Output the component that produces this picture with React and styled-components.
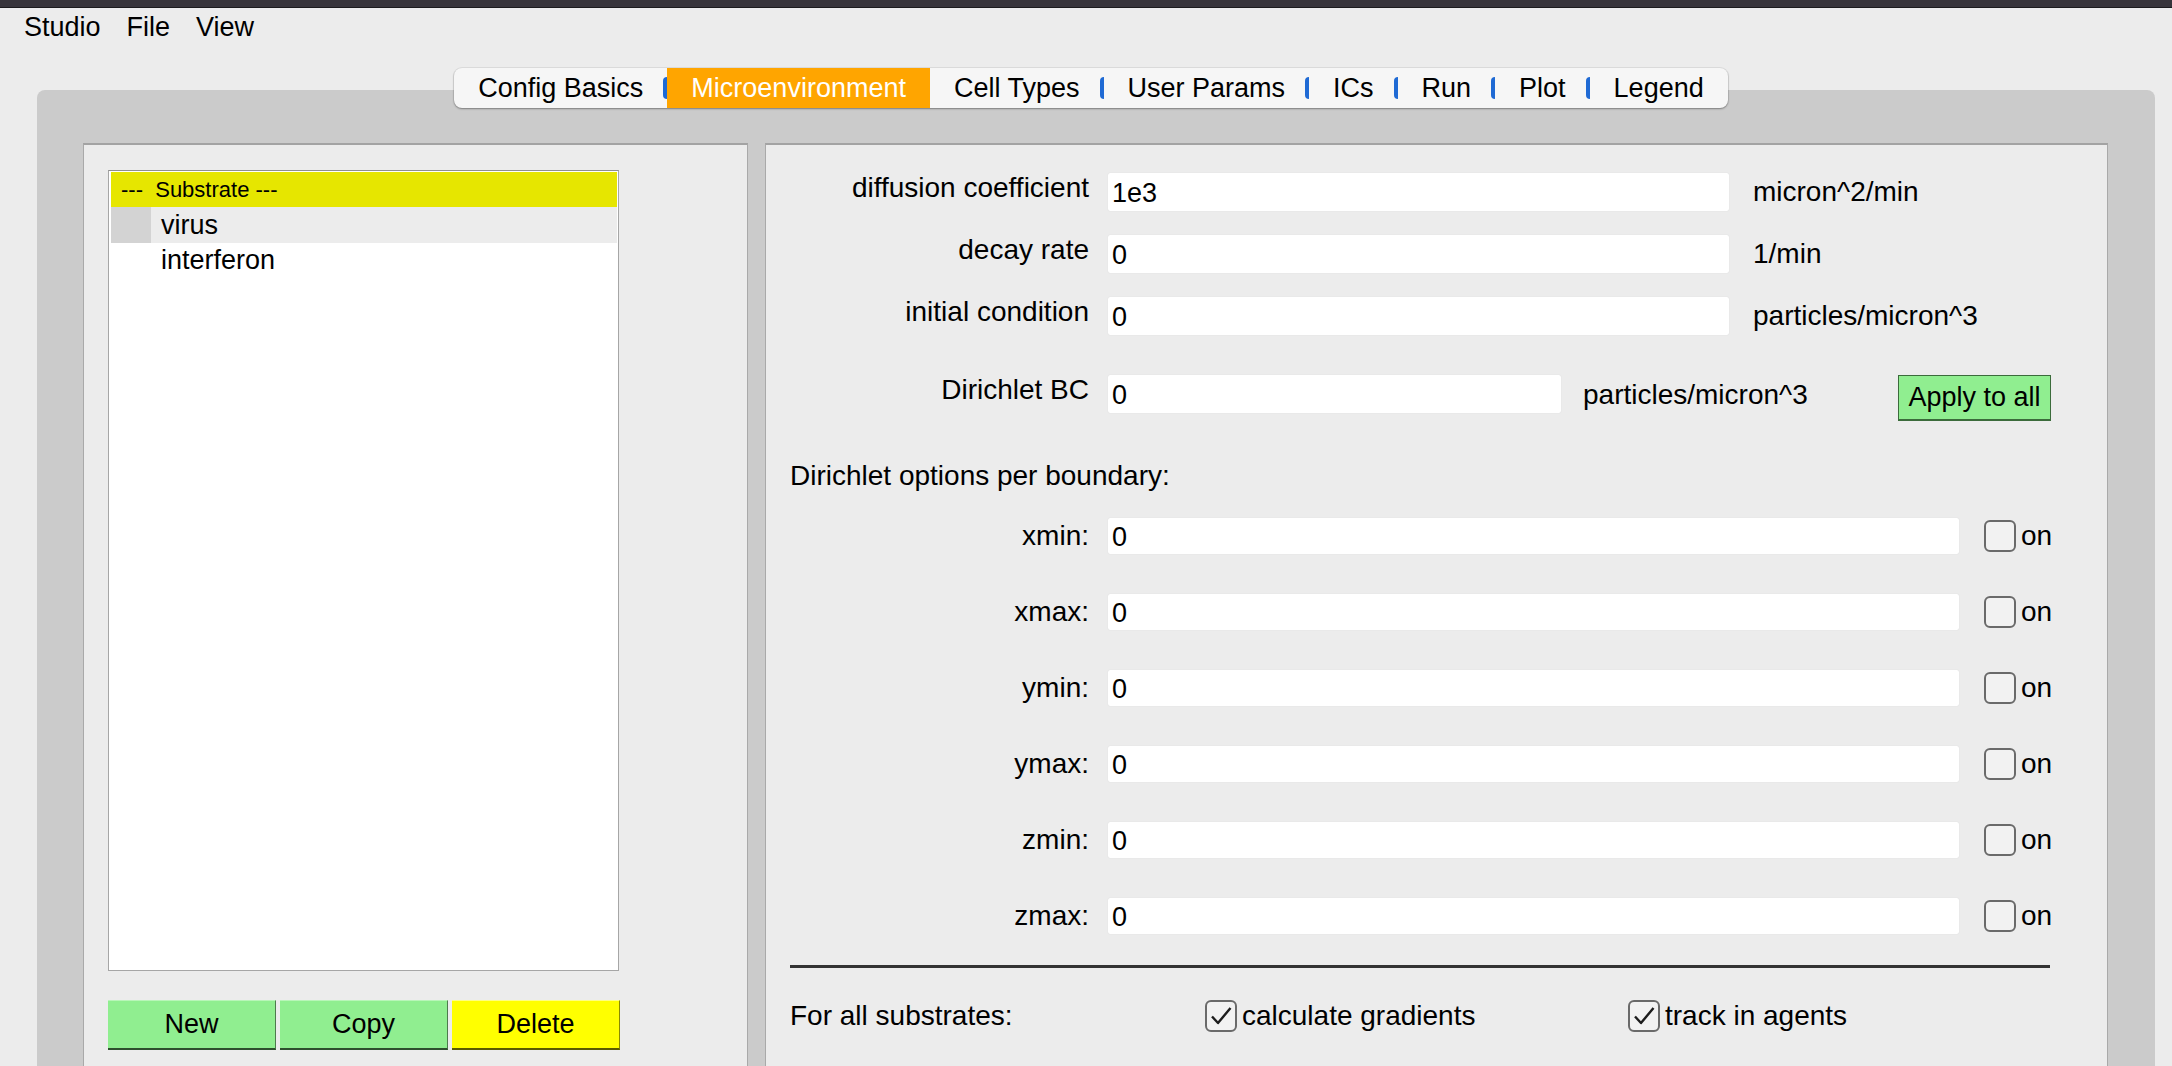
import React from "react"
import styled, { createGlobalStyle } from "styled-components"

const GlobalStyle = createGlobalStyle`
    html, body {
        margin: 0;
        padding: 0;
        background: #ececec;
        font-family: "Liberation Sans", Arial, sans-serif;
        color: #000;
    }
    #root {
        height: 1066px;
        overflow: hidden;
    }
`

const tabs = [
    { name: 'Config Basics', sep: true },
    { name: 'Microenvironment', active: true },
    { name: 'Cell Types', sep: true },
    { name: 'User Params', sep: true },
    { name: 'ICs', sep: true },
    { name: 'Run', sep: true },
    { name: 'Plot', sep: true },
    { name: 'Legend' },
]

const fields = [
    { label: 'diffusion coefficient', value: '1e3', unit: 'micron^2/min' },
    { label: 'decay rate', value: '0', unit: '1/min' },
    { label: 'initial condition', value: '0', unit: 'particles/micron^3' },
]

const boundaries = ['xmin', 'xmax', 'ymin', 'ymax', 'zmin', 'zmax']

const Check = () => (
    <svg width="26" height="26" viewBox="0 0 26 26">
        <path d="M4 13.5 L10 20 L22.5 5" fill="none" stroke="#1d1d1d" strokeWidth="2.4" strokeLinejoin="round" />
    </svg>
)

export default function App() {
    return (
        <>
            <GlobalStyle />
            <TitleStrip />
            <MenuBar>
                <MenuItem>Studio</MenuItem>
                <MenuItem>File</MenuItem>
                <MenuItem>View</MenuItem>
            </MenuBar>
            <TabWidget>
                <TabBar>
                    {tabs.map(t => (
                        <Tab key={t.name} $active={t.active} $sep={t.sep}>
                            {t.name}
                        </Tab>
                    ))}
                </TabBar>
                <Frame>
                    <LeftPanel>
                        <ListBox>
                            <ListHeader>---&nbsp;&nbsp;Substrate ---</ListHeader>
                            <ListRow $selected>
                                <RowMarker />
                                virus
                            </ListRow>
                            <ListRow>
                                <RowMarker $hidden />
                                interferon
                            </ListRow>
                        </ListBox>
                        <ButtonRow>
                            <ActionBtn>New</ActionBtn>
                            <ActionBtn>Copy</ActionBtn>
                            <ActionBtn $yellow>Delete</ActionBtn>
                        </ButtonRow>
                    </LeftPanel>

                    <RightPanel>
                        {fields.map(f => (
                            <FieldRow key={f.label}>
                                <Label>{f.label}</Label>
                                <Input $w={621} defaultValue={f.value} />
                                <Unit>{f.unit}</Unit>
                            </FieldRow>
                        ))}
                        <BcRow>
                            <Label>Dirichlet BC</Label>
                            <Input $w={453} defaultValue="0" />
                            <Unit $gap={22}>particles/micron^3</Unit>
                            <ApplyBtn>Apply to all</ApplyBtn>
                        </BcRow>
                        <Heading>Dirichlet options per boundary:</Heading>
                        <BoundaryList>
                            {boundaries.map(b => (
                                <BoundaryRow key={b}>
                                    <Label $center>{b}:</Label>
                                    <Input $w={851} $h={36} defaultValue="0" />
                                    <CheckItem $gap={25}>
                                        <Box />
                                        on
                                    </CheckItem>
                                </BoundaryRow>
                            ))}
                        </BoundaryList>
                        <Divider />
                        <AllRow>
                            <span>For all substrates:</span>
                            <CheckItem>
                                <Box><Check /></Box>
                                calculate gradients
                            </CheckItem>
                            <CheckItem>
                                <Box><Check /></Box>
                                track in agents
                            </CheckItem>
                        </AllRow>
                    </RightPanel>
                </Frame>
            </TabWidget>
        </>
    )
}

const TitleStrip = styled.div`
    height: 7px;
    background: #37343b;
    border-bottom: 1px solid #1b1a1d;
`

const MenuBar = styled.div`
    display: flex;
    align-items: center;
    height: 39px;
    padding-left: 11px;
    font-size: 27px;
`

const MenuItem = styled.div`
    padding: 0 13px;
`

const TabWidget = styled.div`
    margin: 21px 17px 0 37px;
    display: flex;
    flex-direction: column;
    align-items: center;
`

const TabBar = styled.div`
    position: relative;
    z-index: 1;
    display: flex;
    height: 40px;
    margin-bottom: -18px;
    margin-left: -10px;
    background: #f6f6f6;
    border-radius: 8px;
    box-shadow: 0 1px 2px rgba(0, 0, 0, 0.35), 0 0 0 1px rgba(0, 0, 0, 0.06);
    overflow: hidden;
`

const Tab = styled.div`
    position: relative;
    display: flex;
    align-items: center;
    padding: 0 24px;
    font-size: 27px;
    color: ${p => p.$active ? '#fff' : '#000'};
    background: ${p => p.$active ? '#ffa500' : 'transparent'};

    &::after {
        content: '';
        display: ${p => p.$sep ? 'block' : 'none'};
        position: absolute;
        right: 0;
        top: 9px;
        bottom: 9px;
        width: 4px;
        background: #1f6ad4;
        border-radius: 4px 0 0 4px;
    }
`

const Frame = styled.div`
    align-self: stretch;
    display: flex;
    gap: 17px;
    height: 1000px;
    padding: 53px 47px 0 46px;
    background: #cbcbcb;
    border-radius: 8px 8px 0 0;
`

const Panel = styled.div`
    background: #ececec;
    border: 1px solid #a9a9a9;
    border-top: 2px solid #a3a3a3;
    border-bottom: none;
    box-sizing: border-box;
`

const LeftPanel = styled(Panel)`
    width: 665px;
    padding: 25px 0 0 24px;
`

const ListBox = styled.div`
    width: 511px;
    height: 801px;
    box-sizing: border-box;
    background: #fff;
    border: 1px solid #a6a6a6;
    border-top-color: #8f8f8f;
    padding: 1px 1px 0 2px;
    font-size: 27px;
`

const ListHeader = styled.div`
    height: 35px;
    display: flex;
    align-items: center;
    padding-left: 10px;
    background: #e6e600;
    font-size: 22px;
`

const ListRow = styled.div`
    height: ${p => p.$selected ? '36px' : '35px'};
    display: flex;
    align-items: center;
    background: ${p => p.$selected ? '#ececec' : '#fff'};
`

const RowMarker = styled.div`
    width: 40px;
    height: 100%;
    margin-right: 10px;
    background: ${p => p.$hidden ? 'transparent' : '#d3d3d3'};
`

const ButtonRow = styled.div`
    display: flex;
    gap: 4px;
    margin-top: 29px;
`

const ActionBtn = styled.button`
    width: 168px;
    height: 50px;
    font-family: inherit;
    font-size: 27px;
    color: #000;
    background: ${p => p.$yellow ? '#ffff00' : '#90ee90'};
    border: none;
    border-bottom: 2px solid ${p => p.$yellow ? '#5a5a00' : '#2e4f2e'};
    border-right: 1px solid ${p => p.$yellow ? '#8a8a00' : '#4d7a4d'};
    border-top: 1px solid ${p => p.$yellow ? '#ffff80' : '#b8f6b8'};
    padding: 0;
`

const RightPanel = styled(Panel)`
    width: 1343px;
    padding: 28px 0 0 24px;
    font-size: 28px;
`

const FieldRow = styled.div`
    display: flex;
    align-items: center;
    height: 38px;
    margin-bottom: 24px;
`

const BcRow = styled.div`
    display: flex;
    align-items: flex-start;
    height: 46px;
    margin-top: 40px;
`

const Label = styled.div`
    width: 299px;
    margin-right: 19px;
    text-align: right;
    line-height: 30px;
    align-self: ${p => p.$center ? 'center' : 'flex-start'};
    white-space: nowrap;
`

const Input = styled.input`
    width: ${p => p.$w}px;
    height: ${p => p.$h || 38}px;
    box-sizing: border-box;
    border: none;
    border-radius: 2px;
    background: #fff;
    box-shadow: 0 0 1px rgba(0, 0, 0, 0.15);
    padding: 2px 4px 0;
    font-family: inherit;
    font-size: 27px;
    color: #000;
    outline: none;
`

const Unit = styled.div`
    margin-left: ${p => p.$gap || 24}px;
    white-space: nowrap;
    align-self: ${p => p.$gap ? 'flex-start' : 'center'};
    line-height: ${p => p.$gap ? '40px' : 'normal'};
`

const ApplyBtn = styled.button`
    margin-left: auto;
    margin-right: 56px;
    width: 153px;
    height: 46px;
    padding: 0;
    font-family: inherit;
    font-size: 27px;
    color: #000;
    background: #90ee90;
    border: 1px solid #3b6b3b;
    border-bottom-width: 2px;
`

const Heading = styled.div`
    line-height: 30px;
    margin-top: 40px;
`

const BoundaryList = styled.div`
    display: flex;
    flex-direction: column;
    gap: 40px;
    margin-top: 27px;
`

const BoundaryRow = styled.div`
    display: flex;
    align-items: center;
    height: 36px;
`

const CheckItem = styled.label`
    display: flex;
    align-items: center;
    gap: 5px;
    margin-left: ${p => p.$gap || 0}px;
    white-space: nowrap;
`

const Box = styled.span`
    width: 32px;
    height: 32px;
    box-sizing: border-box;
    border: 2px solid #6a6a6a;
    border-radius: 6px;
    background: #f2f2f2;
    display: flex;
    align-items: center;
    justify-content: center;
`

const Divider = styled.div`
    width: 1260px;
    height: 3px;
    margin-top: 31px;
    background: #333;
`

const AllRow = styled.div`
    display: grid;
    grid-template-columns: 415px 423px auto;
    align-items: center;
    margin-top: 32px;
    height: 32px;
`
